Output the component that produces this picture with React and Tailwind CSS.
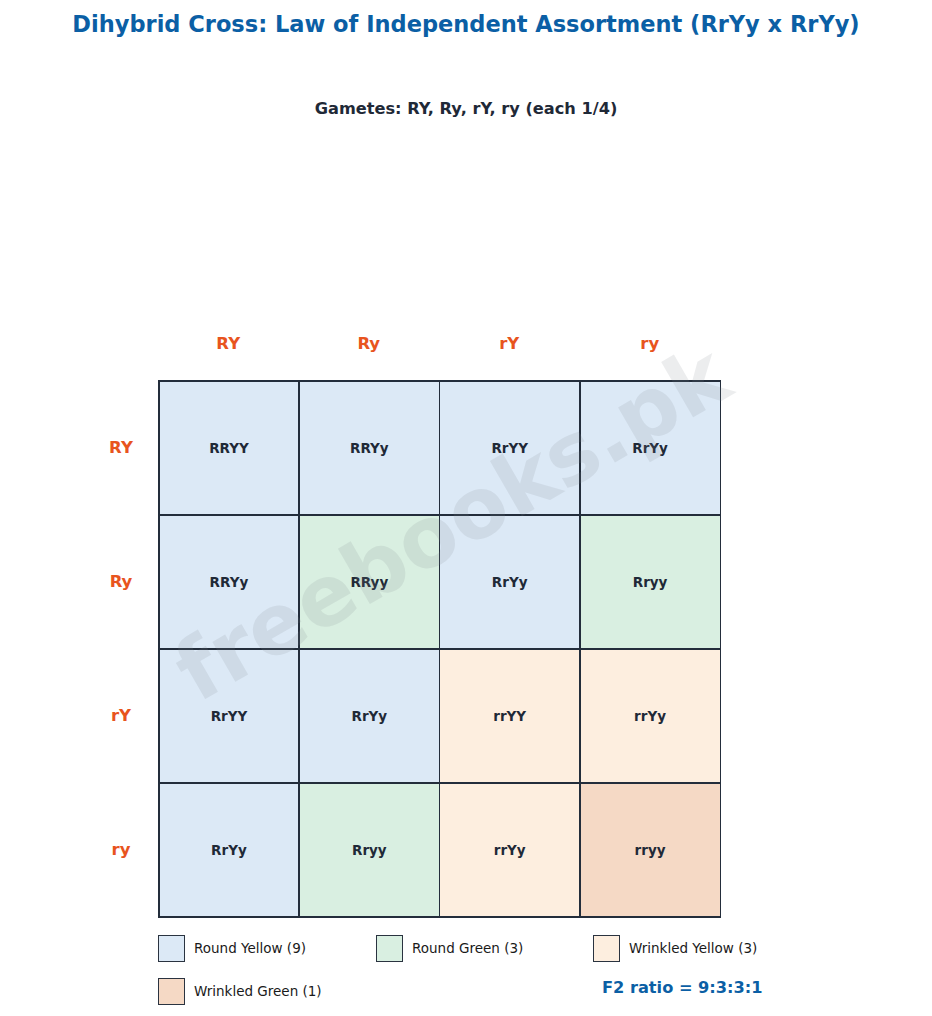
import React from "react";

const cols = ["RY", "Ry", "rY", "ry"];

const colors = {
  b: "bg-[#dce9f6]",
  g: "bg-[#d9efe1]",
  c: "bg-[#fdeedf]",
  p: "bg-[#f5d9c5]",
};

const rows = [
  [["RRYY", "b"], ["RRYy", "b"], ["RrYY", "b"], ["RrYy", "b"]],
  [["RRYy", "b"], ["RRyy", "g"], ["RrYy", "b"], ["Rryy", "g"]],
  [["RrYY", "b"], ["RrYy", "b"], ["rrYY", "c"], ["rrYy", "c"]],
  [["RrYy", "b"], ["Rryy", "g"], ["rrYy", "c"], ["rryy", "p"]],
];

const Legend = ({ color, label, className = "" }) => (
  <div className={`flex items-center gap-[9px] ${className}`}>
    <div className={`w-[27px] h-[27px] border-[1.5px] border-[#2a3340] ${color}`} />
    <span className="text-[13.5px] text-[#1a1a1a]">{label}</span>
  </div>
);

const App = () => {
  return (
    <div className="relative w-[932px] h-[1016px] bg-white overflow-hidden font-['DejaVu_Sans',sans-serif]">
      <h1 className="pt-[9px] text-center text-[22.5px] leading-[30px] font-bold text-[#0b5fa5]">
        Dihybrid Cross: Law of Independent Assortment (RrYy x RrYy)
      </h1>
      <p className="mt-[59px] text-center text-[16.2px] leading-[22px] font-bold text-[#1f2937]">
        Gametes: RY, Ry, rY, ry (each 1/4)
      </p>

      <div className="mt-[209px] ml-[84px] flex flex-col">
        <div className="flex pl-[74px] h-[51px] pt-[3px]">
          {cols.map((c) => (
            <div key={c} className="w-[140.5px] text-center text-[16.5px] leading-[24px] font-bold text-[#e8541e]">
              {c}
            </div>
          ))}
        </div>
        <div className="flex">
          <div className="flex flex-col w-[74px] pt-[1px]">
            {cols.map((c) => (
              <div key={c} className="h-[134px] flex items-center justify-center text-[16.5px] font-bold text-[#e8541e]">
                {c}
              </div>
            ))}
          </div>
          <div className="grid grid-cols-4 gap-[1.5px] p-[1.5px] bg-[#232d3b] w-[563px]">
            {rows.flat().map(([g, k], i) => (
              <div key={i} className={`h-[132.5px] flex items-center justify-center text-[13.5px] font-bold text-[#1f2937] ${colors[k]}`}>
                {g}
              </div>
            ))}
          </div>
        </div>
      </div>

      <div className="mt-[17px] ml-[158px] flex">
        <Legend color={colors.b} label="Round Yellow (9)" className="w-[218px]" />
        <Legend color={colors.g} label="Round Green (3)" className="w-[217px]" />
        <Legend color={colors.c} label="Wrinkled Yellow (3)" />
      </div>
      <div className="mt-[16px] ml-[158px] flex items-center">
        <Legend color={colors.p} label="Wrinkled Green (1)" className="w-[444px]" />
        <span className="text-[16.2px] font-bold text-[#0b5fa5] -mt-[6px]">F2 ratio = 9:3:3:1</span>
      </div>

      <div className="absolute left-[452px] top-[523px] -translate-x-1/2 -translate-y-1/2 -rotate-[30deg] text-[84px] font-bold text-[#808890]/15 whitespace-nowrap pointer-events-none">
        freebooks.pk
      </div>
    </div>
  );
};

export default App;
